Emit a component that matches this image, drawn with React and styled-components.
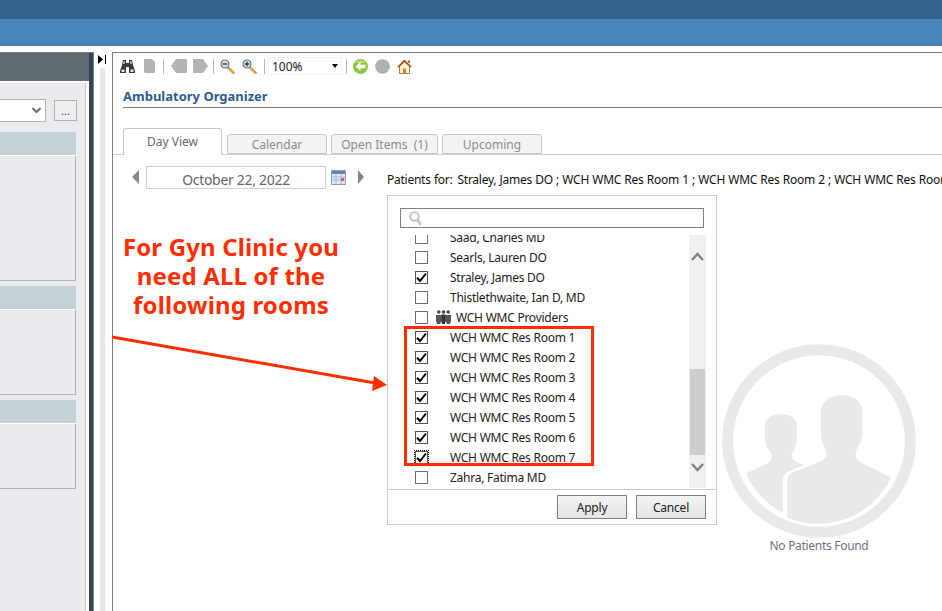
import React from "react";
import styled, { createGlobalStyle } from "styled-components";

const GlobalStyle = createGlobalStyle`
  html, body {
    margin: 0;
    padding: 0;
    background: #fff;
    overflow: hidden;
  }
`;

const UI_FONT = `"Noto Sans", "DejaVu Sans", sans-serif`;

const people = [
  { name: "Saad, Charles MD" },
  { name: "Searls, Lauren DO" },
  { name: "Straley, James DO", checked: true },
  { name: "Thistlethwaite, Ian D, MD" },
  { name: "WCH WMC Providers", group: true },
  { name: "WCH WMC Res Room 1", checked: true },
  { name: "WCH WMC Res Room 2", checked: true },
  { name: "WCH WMC Res Room 3", checked: true },
  { name: "WCH WMC Res Room 4", checked: true },
  { name: "WCH WMC Res Room 5", checked: true },
  { name: "WCH WMC Res Room 6", checked: true },
  { name: "WCH WMC Res Room 7", checked: true, focused: true },
  { name: "Zahra, Fatima MD" },
];

const sections = [125, 85, 65];

const Binoculars = () => (
  <svg width="15" height="15" viewBox="0 0 15 15">
    <path d="M3 1h3v3h3V1h3l1 5 2 6v2H9V8H6v6H0v-2l2-6z" fill="#3a3a3a" />
    <path d="M1.500 10.500h3v2.500h-3zM10.500 10.500h3v2.500h-3z" fill="#e4e4e4" />
    <path d="M3.500 2h1.500v3H3zM10 2h1.500l.5 3h-2z" fill="#b0b0b0" />
  </svg>
);

const PageGlyph = () => (
  <svg width="11" height="16" viewBox="0 0 11 16">
    <path d="M0 1h8l3 3v11H1l-1-1z" fill="#b4b4b4" />
  </svg>
);

const PagePrev = () => (
  <svg width="16" height="16" viewBox="0 0 16 16">
    <path d="M5 1h11v14H5L0 8z" fill="#b4b4b4" />
  </svg>
);

const PageNext = () => (
  <svg width="15" height="16" viewBox="0 0 15 16">
    <path d="M0 1h10l5 7-5 7H0z" fill="#b4b4b4" />
  </svg>
);

const Magnifier = ({ plus }) => (
  <svg width="15" height="15" viewBox="0 0 15 15">
    <path d="M7.500 8l6 5.800" stroke="#dfa050" strokeWidth="2.800" strokeLinecap="round" />
    <circle cx="5" cy="5" r="4" fill="#cfe0f0" stroke="#66707c" strokeWidth="1.200" />
    <path d="M2.800 5h4.400" stroke="#222c44" strokeWidth="1.300" />
    {plus && <path d="M5 2.800v4.400" stroke="#222c44" strokeWidth="1.300" />}
  </svg>
);

const BackCircle = () => (
  <svg width="15" height="15" viewBox="0 0 15 15">
    <circle cx="7.500" cy="7.500" r="7.500" fill="#8cc63f" />
    <path d="M2 4a7 7 0 0 1 11 0z" fill="#b9e070" />
    <path d="M2.500 7.500L7.500 3v2.800H12.500v3.400H7.500V12z" fill="#fff" />
  </svg>
);

const StopCircle = () => (
  <svg width="15" height="15" viewBox="0 0 15 15">
    <circle cx="7.500" cy="7.500" r="7.300" fill="#b0b0b0" />
  </svg>
);

const HomeIcon = () => (
  <svg width="15" height="15" viewBox="0 0 15 15">
    <path d="M2.500 7v7.500h10V7L7.500 2.500z" fill="#fdf3c8" stroke="#6a5020" strokeWidth=".7" />
    <path d="M6 9.500h3v5H6z" fill="#d9892a" />
    <path d="M0 8l7.500-7.500L15 8l-1.500.6-6-5.600-6 5.600z" fill="#a8481f" />
    <path d="M11 1.500h1.800v3L11 3z" fill="#6a5020" />
  </svg>
);

const CalendarIcon = () => (
  <svg width="15" height="15" viewBox="0 0 15 15">
    <rect x=".5" y=".5" width="14" height="14" fill="#dfe6f6" stroke="#8d9fc8" />
    <rect x="1" y="1" width="13" height="3" fill="#6a82b8" />
    <path d="M1 7h13M1 10h13M5 4v10M10 4v10" stroke="#a8b6d8" />
    <rect x="10" y="8" width="3" height="3" fill="#d86a30" />
  </svg>
);

const CheckMark = () => (
  <svg width="11" height="11" viewBox="0 0 11 11">
    <path d="M1 5.800L4 9 10 1.500" fill="none" stroke="#000" strokeWidth="2" />
  </svg>
);

const GroupIcon = () => (
  <svg width="15" height="14" viewBox="0 0 15 14">
    <circle cx="2.800" cy="2" r="1.800" fill="#444" />
    <circle cx="7.500" cy="2" r="1.800" fill="#444" />
    <circle cx="12.200" cy="2" r="1.800" fill="#444" />
    <path d="M0 5h5.200v6l-1 3H1.200L0 11zM9.800 5H15v6l-1 3h-3l-1.200-3z" fill="#555" />
    <path d="M5.200 4.500h4.600V11l-1 3H6.200l-1-3z" fill="#333" />
  </svg>
);

const SearchGlyph = () => (
  <svg width="14" height="15" viewBox="0 0 14 15">
    <circle cx="5.500" cy="5.500" r="4.300" fill="none" stroke="#c4c4c4" strokeWidth="2" />
    <path d="M8.500 9l3.500 5" stroke="#c4c4c4" strokeWidth="2.600" />
  </svg>
);

const Chevron = ({ up }) => (
  <svg width="13" height="9" viewBox="0 0 13 9">
    <path d={up ? "M1 8l5.500-6L12 8" : "M1 1l5.500 6L12 1"} fill="none" stroke="#808080" strokeWidth="2.400" />
  </svg>
);

const NoPatientsArt = () => (
  <svg width="194" height="194" viewBox="36 24 582 582">
    <circle cx="327" cy="315" r="274" fill="none" stroke="#e9e9e9" strokeWidth="33" />
    <path
      d="M232 545V432Q232 416 250 408L335 375Q358 362 345 335Q330 315 332 270V225Q340 178 395 178Q450 178 457 225V275Q460 315 442 335Q428 362 450 378L543 425A242 242 0 0 1 232 545Z"
      fill="#e9e9e9"
    />
    <path
      d="M108 412L172 382Q190 372 183 350Q165 335 165 305V265Q172 235 212 235Q255 235 260 265V310Q258 340 245 352Q240 375 282 388L238 406Q218 416 218 436V530A241 241 0 0 1 108 412Z"
      fill="#e9e9e9"
    />
  </svg>
);

const App = () => (
  <>
    <GlobalStyle />
    <Page>
      <TopBand />
      <SubBand />
      <Content>
        <LeftPanel>
          <LeftBody>
            <PickerRow>
              <FakeSelect>
                <svg width="9" height="7" viewBox="0 0 9 7">
                  <path d="M.5 1l4 4 4-4" fill="none" stroke="#707070" strokeWidth="2" />
                </svg>
              </FakeSelect>
              <DotsButton>...</DotsButton>
            </PickerRow>
            {sections.map((h) => (
              <Section key={h}>
                <SectionHead />
                <SectionBox $height={h} />
              </Section>
            ))}
          </LeftBody>
          <DarkStrip />
        </LeftPanel>

        <Splitter>
          <CollapseIcon>
            <svg width="8" height="9" viewBox="0 0 8 9">
              <path d="M0 0l5 4.500L0 9z" fill="#000" />
              <path d="M7 0h1v9H7z" fill="#000" />
            </svg>
          </CollapseIcon>
          <SplitterBar />
        </Splitter>

        <Main>
          <Toolbar>
            <ToolSlot $left={0}><Binoculars /></ToolSlot>
            <ToolSlot $left={9}><PageGlyph /></ToolSlot>
            <ToolSep $left={8} />
            <ToolSlot $left={7}><PagePrev /></ToolSlot>
            <ToolSlot $left={6}><PageNext /></ToolSlot>
            <ToolSep $left={5} />
            <ToolSlot $left={6}><Magnifier /></ToolSlot>
            <ToolSlot $left={7}><Magnifier plus /></ToolSlot>
            <ToolSep $left={7} />
            <ZoomSelect>
              100%
              <ZoomCaret />
            </ZoomSelect>
            <ToolSep $left={4} />
            <ToolSlot $left={6}><BackCircle /></ToolSlot>
            <ToolSlot $left={7}><StopCircle /></ToolSlot>
            <ToolSlot $left={7}><HomeIcon /></ToolSlot>
          </Toolbar>

          <Title>Ambulatory Organizer</Title>

          <Tabs>
            <Tab $active>Day View</Tab>
            <Tab $width={100}>Calendar</Tab>
            <Tab $width={107}>Open Items&nbsp;&nbsp;(1)</Tab>
            <Tab $width={100}>Upcoming</Tab>
          </Tabs>

          <DateRow>
            <Arrow $dir="left" />
            <DateField>October 22, 2022</DateField>
            <CalendarSlot><CalendarIcon /></CalendarSlot>
            <Arrow $dir="right" />
            <PatientsFor>
              <PatientsLabel>Patients for:</PatientsLabel>
              Straley, James DO ; WCH WMC Res Room 1 ; WCH WMC Res Room 2 ; WCH WMC Res Room 3 ; WCH WMC Res Room 4
            </PatientsFor>
          </DateRow>

          <EmptyState>
            <NoPatientsArt />
            <EmptyLabel>No Patients Found</EmptyLabel>
          </EmptyState>

          <Popup>
            <SearchBox><SearchGlyph /></SearchBox>
            <ListArea>
              <List>
                {people.map((p) => (
                  <Row key={p.name}>
                    <Box $checked={p.checked} $focused={p.focused}>
                      {p.checked && <CheckMark />}
                    </Box>
                    {p.group && <GroupSlot><GroupIcon /></GroupSlot>}
                    <RowName $group={p.group}>{p.name}</RowName>
                  </Row>
                ))}
              </List>
              <Scrollbar>
                <ScrollUp><Chevron up /></ScrollUp>
                <ScrollThumb />
                <ScrollDown><Chevron /></ScrollDown>
              </Scrollbar>
            </ListArea>
            <PopupFooter>
              <PopupButton>Apply</PopupButton>
              <PopupButton>Cancel</PopupButton>
            </PopupFooter>
            <RedBox />
          </Popup>
        </Main>
      </Content>

      <Callout>
        For Gyn Clinic you
        <br />
        need ALL of the
        <br />
        following rooms
      </Callout>
      <CalloutArrow width="942" height="611" viewBox="0 0 942 611">
        <path d="M112 337L375 383" stroke="#ff2d00" strokeWidth="3" />
        <path d="M387 385L372 391 374 376z" fill="#ff2d00" />
      </CalloutArrow>
    </Page>
  </>
);

export default App;

const Page = styled.div`
  position: relative;
  display: flex;
  flex-direction: column;
  width: 942px;
  height: 611px;
  overflow: hidden;
  background: #fff;
  font-family: ${UI_FONT};
`;

const TopBand = styled.div`
  height: 19px;
  background: #34628f;
`;

const SubBand = styled.div`
  height: 27px;
  background: #4a84ba;
`;

const Content = styled.div`
  flex: 1;
  display: flex;
  margin-top: 6px;
  min-height: 0;
`;

const LeftPanel = styled.div`
  box-sizing: border-box;
  display: flex;
  width: 94px;
  background: #5f6b70;
  border-top: 1px solid #7a7a7a;
  border-right: 1px solid #808080;
`;

const LeftBody = styled.div`
  box-sizing: border-box;
  width: 89px;
  margin-top: 28px;
  padding-top: 16px;
  background: #e9ebef;
  border-top: 2px solid #fff;
  border-right: 3px solid #fff;
  box-shadow: inset -1px 0 0 #c4c8cc;
`;

const DarkStrip = styled.div`
  width: 4px;
  background: #36465a;
`;

const PickerRow = styled.div`
  display: flex;
  align-items: center;
  gap: 8px;
  height: 22px;
  margin-bottom: 11px;
`;

const FakeSelect = styled.div`
  box-sizing: border-box;
  display: flex;
  align-items: center;
  justify-content: flex-end;
  width: 46px;
  height: 23px;
  padding-right: 4px;
  background: #fff;
  border: 1px solid #b4b4b4;
  border-left: none;
`;

const DotsButton = styled.div`
  box-sizing: border-box;
  width: 23px;
  height: 21px;
  background: #efefef;
  border: 1px solid #b4b4b4;
  font-size: 11px;
  line-height: 20px;
  text-align: center;
  color: #444;
`;

const Section = styled.div`
  width: 76px;
  margin-bottom: 5px;
`;

const SectionHead = styled.div`
  height: 23px;
  background: #c5d1d6;
  border-bottom: 1px solid #fff;
`;

const SectionBox = styled.div`
  box-sizing: border-box;
  height: ${(p) => p.$height}px;
  border-right: 1px solid #b2b4b8;
  border-bottom: 1px solid #b2b4b8;
`;

const Splitter = styled.div`
  display: flex;
  flex-direction: column;
  width: 18px;
`;

const CollapseIcon = styled.div`
  display: flex;
  height: 16px;
  padding: 3px 0 0 4px;
  box-sizing: border-box;
`;

const SplitterBar = styled.div`
  flex: 1;
  width: 5px;
  margin-left: 6px;
  background: #e6e6e6;
`;

const Main = styled.div`
  position: relative;
  flex: 1;
  min-width: 0;
  border-left: 1px solid #808080;
  border-top: 1px solid #808080;
`;

const Toolbar = styled.div`
  display: flex;
  align-items: center;
  height: 18px;
  margin-top: 4px;
  padding-left: 7px;
`;

const ToolSlot = styled.div`
  display: flex;
  flex-shrink: 0;
  margin-left: ${(p) => p.$left}px;
`;

const ToolSep = styled.div`
  width: 1px;
  height: 15px;
  margin-left: ${(p) => p.$left}px;
  background: #b8b8b8;
`;

const ZoomSelect = styled.div`
  box-sizing: border-box;
  display: flex;
  align-items: center;
  justify-content: space-between;
  width: 74px;
  height: 18px;
  margin-left: 3px;
  padding: 0 3px;
  border: 1px solid #f2f2f2;
  font-size: 12px;
  color: #222;
`;

const ZoomCaret = styled.span`
  width: 0;
  height: 0;
  border-left: 3px solid transparent;
  border-right: 3px solid transparent;
  border-top: 4px solid #000;
`;

const Title = styled.div`
  height: 22px;
  margin: 10px 0 0 10px;
  border-bottom: 1px solid #808080;
  font-size: 13px;
  font-weight: 700;
  line-height: 22px;
  color: #2f5b90;
`;

const Tabs = styled.div`
  display: flex;
  align-items: flex-end;
  gap: 4px;
  height: 26px;
  margin-top: 20px;
  padding-left: 10px;
  border-bottom: 1px solid #cccccc;
`;

const Tab = styled.div`
  box-sizing: border-box;
  width: ${(p) => (p.$active ? 99 : p.$width)}px;
  height: ${(p) => (p.$active ? 27 : 20)}px;
  margin-bottom: ${(p) => (p.$active ? -1 : 0)}px;
  margin-right: ${(p) => (p.$active ? 1 : 0)}px;
  padding-bottom: ${(p) => (p.$active ? 2 : 0)}px;
  background: ${(p) => (p.$active ? "#fff" : "#f3f3f3")};
  border: 1px solid #c8c8c8;
  border-bottom: ${(p) => (p.$active ? "none" : "1px solid #c8c8c8")};
  border-radius: 3px 3px 0 0;
  display: flex;
  align-items: center;
  justify-content: center;
  font-size: 12px;
  color: ${(p) => (p.$active ? "#666" : "#8c8c8c")};
`;

const DateRow = styled.div`
  display: flex;
  align-items: center;
  height: 24px;
  margin-top: 10px;
  padding-left: 19px;
  white-space: nowrap;
  overflow: hidden;
`;

const Arrow = styled.span`
  flex-shrink: 0;
  width: 0;
  height: 0;
  border-top: 7px solid transparent;
  border-bottom: 7px solid transparent;
  ${(p) =>
    p.$dir === "left"
      ? "border-right: 7px solid #808890; margin-right: 7px;"
      : "border-left: 6px solid #808890; margin-left: 12px;"}
`;

const DateField = styled.div`
  box-sizing: border-box;
  flex-shrink: 0;
  width: 180px;
  height: 23px;
  border: 1px solid #d0d0d0;
  font-size: 14px;
  letter-spacing: -0.3px;
  line-height: 25px;
  text-align: center;
  color: #666;
`;

const CalendarSlot = styled.div`
  display: flex;
  flex-shrink: 0;
  margin-left: 5px;
`;

const PatientsFor = styled.div`
  flex-shrink: 0;
  margin: 5px 0 0 23px;
  font-size: 12px;
  letter-spacing: -0.25px;
  word-spacing: 0.35px;
  color: #111;
`;

const PatientsLabel = styled.span`
  margin-right: 5px;
`;

const EmptyState = styled.div`
  display: flex;
  flex-direction: column;
  align-items: center;
  width: 194px;
  margin: 155px 0 0 609px;
`;

const EmptyLabel = styled.div`
  margin-top: -1px;
  font-size: 12px;
  letter-spacing: -0.3px;
  color: #707080;
`;

const Popup = styled.div`
  box-sizing: border-box;
  position: absolute;
  left: 274px;
  top: 142px;
  display: flex;
  flex-direction: column;
  width: 330px;
  height: 330px;
  background: #fff;
  border: 1px solid #cccccc;
`;

const SearchBox = styled.div`
  box-sizing: border-box;
  display: flex;
  align-items: center;
  width: 304px;
  height: 20px;
  margin: 12px 0 0 12px;
  padding-left: 8px;
  border: 1px solid #808080;
`;

const ListArea = styled.div`
  display: flex;
  height: 253px;
  margin-top: 7px;
  overflow: hidden;
`;

const List = styled.div`
  flex: 1;
  min-width: 0;
  margin-top: -8px;
  padding-left: 27px;
`;

const Row = styled.div`
  display: flex;
  align-items: center;
  height: 20px;
`;

const Box = styled.span`
  box-sizing: border-box;
  display: flex;
  align-items: center;
  justify-content: center;
  width: 13px;
  height: 13px;
  background: #fff;
  border: 1px solid ${(p) => (p.$checked ? "#555" : "#707070")};
  ${(p) => p.$focused && "outline: 1px dotted #000;"}
`;

const GroupSlot = styled.span`
  display: flex;
  margin-left: 8px;
`;

const RowName = styled.span`
  margin-left: ${(p) => (p.$group ? 5 : 22)}px;
  font-size: 12px;
  letter-spacing: -0.25px;
  color: #222;
  white-space: nowrap;
`;

const Scrollbar = styled.div`
  display: flex;
  flex-direction: column;
  align-items: center;
  width: 17px;
  margin-right: 10px;
  background: #f0f0f0;
`;

const ScrollUp = styled.div`
  display: flex;
  margin-top: 17px;
`;

const ScrollThumb = styled.div`
  width: 15px;
  height: 86px;
  margin-top: 108px;
  background: #cdcdcd;
`;

const ScrollDown = styled.div`
  display: flex;
  margin-top: 8px;
`;

const PopupFooter = styled.div`
  display: flex;
  justify-content: flex-end;
  gap: 9px;
  padding: 5px 10px 0 0;
  margin-top: 1px;
  border-top: 1px solid #cccccc;
`;

const PopupButton = styled.div`
  box-sizing: border-box;
  width: 70px;
  height: 24px;
  background: linear-gradient(#f4f4f4, #e4e4e4);
  border: 1px solid #808080;
  font-size: 12px;
  letter-spacing: -0.2px;
  line-height: 24px;
  text-align: center;
  color: #222;
`;

const RedBox = styled.div`
  box-sizing: border-box;
  position: absolute;
  left: 16px;
  top: 130px;
  width: 190px;
  height: 140px;
  border: 3px solid #ff2d00;
  pointer-events: none;
`;

const Callout = styled.div`
  position: absolute;
  left: 96px;
  top: 232px;
  width: 270px;
  font-family: "Noto Sans", "Liberation Sans", sans-serif;
  font-size: 24px;
  font-weight: 700;
  letter-spacing: 0.15px;
  line-height: 29px;
  text-align: center;
  color: #ff2d00;
`;

const CalloutArrow = styled.svg`
  position: absolute;
  left: 0;
  top: 0;
  pointer-events: none;
`;
